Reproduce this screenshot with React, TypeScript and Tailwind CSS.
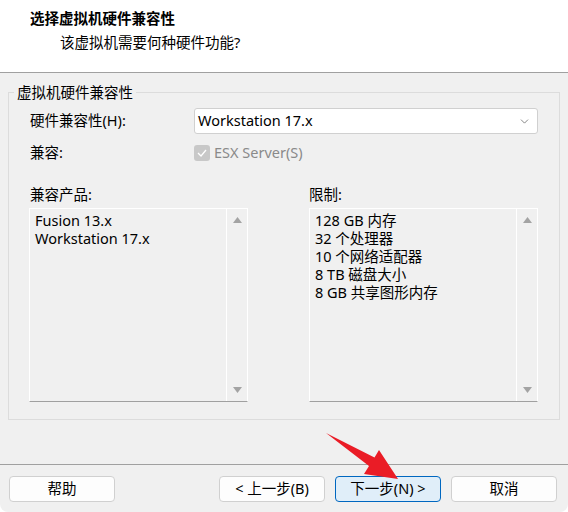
import { ChevronDown } from 'lucide-react'

const products = ['Fusion 13.x', 'Workstation 17.x']
const limits = ['128 GB 内存', '32 个处理器', '10 个网络适配器', '8 TB 磁盘大小', '8 GB 共享图形内存']

const font = { fontFamily: '"Noto Sans", "Noto Sans CJK SC", sans-serif' }

function ListBox({ items, width }: { items: string[]; width: string }) {
  return (
    <div className={`flex h-[194px] border border-white border-b-[#a0a0a0] bg-[#f0f0f0] ${width}`}>
      <div className="flex-1 pl-[5px] pt-[2px] text-[14.5px] leading-[18px] text-black">
        {items.map((item) => (
          <div key={item}>{item}</div>
        ))}
      </div>
      <div className="flex w-[21px] flex-col items-center justify-between border-l border-white py-[8px]">
        <svg width="9" height="6" viewBox="0 0 9 6">
          <polygon points="4.5,0 9,6 0,6" fill="#a3a3a3" />
        </svg>
        <svg width="9" height="6" viewBox="0 0 9 6">
          <polygon points="0,0 9,0 4.5,6" fill="#a3a3a3" />
        </svg>
      </div>
    </div>
  )
}

function Button({ children, primary = false, className = '' }: { children: string; primary?: boolean; className?: string }) {
  return (
    <button
      className={`flex h-[26px] w-[106px] items-center justify-center rounded-[4px] border text-[14.5px] text-black ${
        primary ? 'border-[#0067c0] bg-[#e0eef9]' : 'border-[#d0d0d0] bg-[#fdfdfd]'
      } ${className}`}
    >
      {children}
    </button>
  )
}

export default function App() {
  return (
    <div className="relative flex h-[512px] w-[568px] flex-col overflow-hidden rounded-b-[8px] bg-[#f0f0f0] text-black" style={font}>
      {/* header */}
      <div className="h-[73px] border-b border-[#a0a0a0] bg-white pl-[30px] pt-[8px]">
        <div className="text-[14.5px] font-bold leading-[20px]">选择虚拟机硬件兼容性</div>
        <div className="mt-[4px] pl-[30px] text-[14.5px] leading-[20px]">该虚拟机需要何种硬件功能?</div>
      </div>

      {/* group box */}
      <fieldset className="mx-[8px] mt-[9px] h-[338px] border border-[#dcdcdc] pl-[20px]">
        <legend className="ml-[-15px] px-[3px] text-[14.5px] leading-[20px]">虚拟机硬件兼容性</legend>

        <div className="mt-[6px] flex items-center">
          <div className="w-[165px] pl-px text-[14.5px]">硬件兼容性(H):</div>
          <div className="flex h-[26px] w-[344px] items-center justify-between rounded-[3px] border border-[#d0d0d0] bg-white pl-[3px] pr-[6px] text-[14.5px]">
            <span>Workstation 17.x</span>
            <ChevronDown size={13} strokeWidth={1.3} color="#555" />
          </div>
        </div>

        <div className="mt-[9px] flex h-[20px] items-center">
          <div className="w-[165px] pl-px text-[14.5px]">兼容:</div>
          <div className="flex items-center gap-[4px] text-[14.5px] text-[#8a8a8a]">
            <span className="flex h-[16px] w-[16px] items-center justify-center rounded-[3px] bg-[#c8c8c8]">
              <svg width="10" height="8" viewBox="0 0 10 8">
                <polyline points="1,4 4,7 9,1" fill="none" stroke="white" strokeWidth="1.3" />
              </svg>
            </span>
            ESX Server(S)
          </div>
        </div>

        <div className="mt-[21px] flex gap-[61px]">
          <div>
            <div className="pl-px text-[14.5px] leading-[20px]">兼容产品:</div>
            <div className="mt-[4px]">
              <ListBox items={products} width="w-[219px]" />
            </div>
          </div>
          <div>
            <div className="text-[14.5px] leading-[20px]">限制:</div>
            <div className="mt-[4px]">
              <ListBox items={limits} width="w-[229px]" />
            </div>
          </div>
        </div>
      </fieldset>

      {/* footer */}
      <div className="mt-auto flex h-[48px] border-t border-[#a0a0a0] pl-[9px] pt-[11px]">
        <Button>帮助</Button>
        <Button className="ml-[104px]">&lt; 上一步(B)</Button>
        <Button primary className="ml-[10px]">下一步(N) &gt;</Button>
        <Button className="ml-[10px]">取消</Button>
      </div>

      {/* annotation arrow */}
      <svg className="pointer-events-none absolute left-0 top-0" width="568" height="512">
        <polygon points="326,433 374.5,457.5 379,450 398,479 364,474 369,466" fill="#ea1c26" />
      </svg>
    </div>
  )
}
